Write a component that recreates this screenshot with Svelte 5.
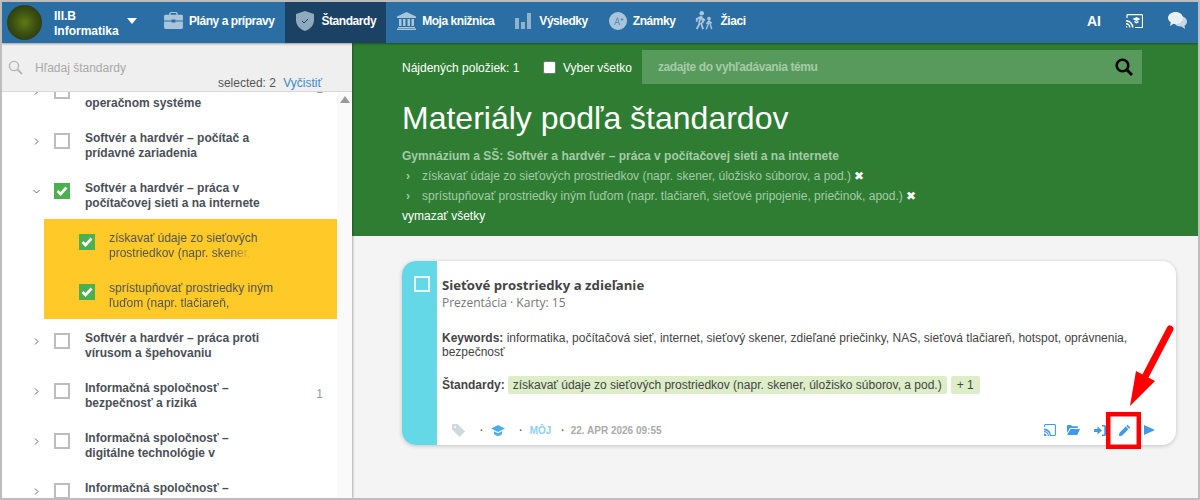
<script>
  const menu = [
    { id: "plans", label: "Plány a prípravy" },
    { id: "standards", label: "Štandardy", active: true },
    { id: "library", label: "Moja knižnica" },
    { id: "results", label: "Výsledky" },
    { id: "grades", label: "Známky" },
    { id: "pupils", label: "Žiaci" }
  ];

  const rows = [
    { lines: ["", "operačnom systéme"], count: "1", first: true },
    { lines: ["Softvér a hardvér – počítač a", "prídavné zariadenia"] },
    {
      lines: ["Softvér a hardvér – práca v", "počítačovej sieti a na internete"],
      open: true,
      checked: true,
      kids: [
        ["získavať údaje zo sieťových", "prostriedkov (napr. skener,"],
        ["sprístupňovať prostriedky iným", "ľuďom (napr. tlačiareň,"]
      ]
    },
    { lines: ["Softvér a hardvér – práca proti", "vírusom a špehovaniu"] },
    { lines: ["Informačná spoločnosť –", "bezpečnosť a riziká"], count: "1" },
    { lines: ["Informačná spoločnosť –", "digitálne technológie v"] },
    { lines: ["Informačná spoločnosť –", "autorské práva"] }
  ];
</script>

<div class="frame">
  <nav class="nav">
    <div class="klass">
      <span class="avatar"></span>
      <span class="klass-name">III.B<br />Informatika</span>
      <span class="caret"></span>
    </div>
    {#each menu as item}
      <a class="nav-item {item.id}" class:active={item.active} href="#{item.id}">
        {#if item.id === "plans"}
          <svg width="19" height="17" viewBox="0 0 20 18"><path fill="#a9c5dc" d="M7 1h6v2h1.500V1.500L13.500 0h-7L5.500 1.500V3H7zM1.500 3h17A1.500 1.500 0 0 1 20 4.500V9H12V8H8v1H0V4.500A1.500 1.500 0 0 1 1.500 3zM0 10h8v1h4v-1h8v6.500a1.500 1.500 0 0 1-1.500 1.500h-17A1.500 1.500 0 0 1 0 16.500z"/></svg>
        {:else if item.id === "standards"}
          <svg width="18" height="20" viewBox="0 0 18 20"><path fill="#8fa9bd" d="M9 0l9 3v6c0 5-3.600 9-9 11C3.600 18 0 14 0 9V3z"/><path fill="none" stroke="#1b4264" stroke-width="1" d="M6 10l2 2 4-4"/></svg>
        {:else if item.id === "library"}
          <svg width="19" height="18" viewBox="0 0 19 18"><path fill="#a9c5dc" d="M9.500 0L19 4.500V6H0V4.500zM2 7h2.500v7H2zM6 7h2.500v7H6zM10.500 7H13v7h-2.500zM14.500 7H17v7h-2.500zM1 15h17v1H1zM0 16.500h19V18H0z"/></svg>
        {:else if item.id === "results"}
          <svg width="16" height="16" viewBox="0 0 16 16"><path fill="#8fb2cf" d="M0 5h4v11H0zM6 9h4v7H6zM12 0h4v16h-4z"/></svg>
        {:else if item.id === "grades"}
          <svg width="18" height="18" viewBox="0 0 18 18"><circle cx="9" cy="9" r="9" fill="#a9c5dc"/><path fill="none" stroke="#5d8fb8" stroke-width="1" d="M5.500 13L8.500 5.500 10.500 13M6.500 10.500h3.500M11.500 7.500h3M13 6v3"/></svg>
        {:else}
          <svg width="20" height="21" viewBox="0 0 22 21"><g fill="none" stroke="#a9c5dc" stroke-width="2"><path d="M8 6L5.500 13M8 6l2 6-2 2 2 6M6.500 13L3 20M8 6L3 9v3M9 8l3 2.500"/><path stroke-width="1.500" d="M16.500 11l-1 4-2 5M16.500 11l1.500 4 1.500 5M13.500 14l3-3 3 2.500"/></g><circle cx="8.500" cy="2.500" r="2.500" fill="#a9c5dc"/><circle cx="16.500" cy="8.500" r="2" fill="#a9c5dc"/></svg>
        {/if}
        <span>{item.label}</span>
      </a>
    {/each}
    <div class="nav-right">
      <span class="ai">AI</span>
      <svg width="17" height="14" viewBox="0 0 17 14"><path fill="none" stroke="#fff" stroke-width="1.200" d="M1 4V1.500A1 1 0 0 1 2 .6h13.500a1 1 0 0 1 1 1v11a1 1 0 0 1-1 1H9"/><path fill="#fff" d="M10.500 3L14.500 5 10.500 7 6.500 5zM8.500 6.800l2 1 2-1V8.500l-2 1-2-1zM0 6a7.500 7.500 0 0 1 7.500 7.500H6A6 6 0 0 0 0 7.500zM0 9a4.500 4.500 0 0 1 4.500 4.500H3A3 3 0 0 0 0 10.500zM0 12a1.500 1.500 0 0 1 1.500 1.500H0z"/></svg>
      <svg width="19" height="17" viewBox="0 0 19 17"><path fill="#c6d8e6" d="M12 4c4 0 7 2.500 7 5.500 0 1.800-1 3.300-2.500 4.300L17 17l-3.500-2.600c-3.800.5-7.500-1.800-7.500-4.900C6 6.500 8 4 12 4z"/><path fill="#e8f0f6" d="M7.500 0C11.600 0 15 2.600 15 6s-3.400 6-7.500 6c-.7 0-1.300-.1-2-.2L2 14l.8-3.700C1.100 9.200 0 7.700 0 6c0-3.400 3.400-6 7.500-6z"/></svg>
    </div>
  </nav>

  <div class="layout">
    <aside class="side">
      <div class="side-search">
        <div class="side-query">
          <svg width="15" height="15" viewBox="0 0 15 15"><circle cx="6" cy="6" r="4.600" fill="none" stroke="#b5b5b5" stroke-width="1.400"/><path stroke="#b5b5b5" stroke-width="1.800" d="M9.500 9.500l4.500 4.500"/></svg>
          <span>Hľadaj štandardy</span>
        </div>
        <div class="selected">selected: 2 <a href="#clear">Vyčistiť</a></div>
      </div>
      <div class="side-body">
        <div class="tree">
          {#each rows as row}
            <div class="row" class:first={row.first}>
              <svg class="chev" width="7" height="7" viewBox="0 0 7 7">
                {#if row.open}
                  <path fill="none" stroke="#666" d="M.5 2l3 3 3-3"/>
                {:else}
                  <path fill="none" stroke="#666" d="M2 .5l3 3-3 3"/>
                {/if}
              </svg>
              <span class="box" class:on={row.checked}>
                {#if row.checked}
                  <svg width="12" height="10" viewBox="0 0 12 10"><path fill="none" stroke="#fff" stroke-width="2.600" d="M1.500 5l3 3 6-6.500"/></svg>
                {/if}
              </span>
              <span class="row-text">{row.lines[0]}<br />{row.lines[1]}</span>
              {#if row.count}<span class="count">{row.count}</span>{/if}
            </div>
            {#if row.kids}
              <div class="kids">
                {#each row.kids as kid}
                  <div class="kid">
                    <span class="box on">
                      <svg width="12" height="10" viewBox="0 0 12 10"><path fill="none" stroke="#fff" stroke-width="2.600" d="M1.500 5l3 3 6-6.500"/></svg>
                    </span>
                    <span class="kid-text">{kid[0]}<span class="fade">{kid[1]}</span></span>
                  </div>
                {/each}
              </div>
            {/if}
          {/each}
        </div>
        <div class="scrollbar"><span class="up"></span></div>
      </div>
    </aside>

    <main class="main">
      <section class="hero">
        <div class="tools">
          <span class="found">Nájdených položiek: 1</span>
          <label class="all"><input type="checkbox" /> Vyber všetko</label>
          <div class="search">
            <span>zadajte do vyhľadávania tému</span>
            <svg width="18" height="18" viewBox="0 0 18 18"><circle cx="7.500" cy="7.500" r="5.800" fill="none" stroke="#000" stroke-width="2.600"/><path stroke="#000" stroke-width="3" d="M11.500 11.500l5.500 5.500"/></svg>
          </div>
        </div>
        <h1>Materiály podľa štandardov</h1>
        <p class="crumb">Gymnázium a SŠ: Softvér a hardvér – práca v počítačovej sieti a na internete</p>
        <p class="pick"><i>›</i>získavať údaje zo sieťových prostriedkov (napr. skener, úložisko súborov, a pod.) <b>✖</b></p>
        <p class="pick"><i>›</i>sprístupňovať prostriedky iným ľuďom (napr. tlačiareň, sieťové pripojenie, priečinok, apod.) <b>✖</b></p>
        <a class="wipe" href="#wipe">vymazať všetky</a>
      </section>

      <section class="content">
        <article class="card">
          <div class="stripe"><span class="card-box"></span></div>
          <div class="card-body">
            <h2>Sieťové prostriedky a zdieľanie</h2>
            <div class="kind">Prezentácia · Karty: 15</div>
            <p class="keys"><strong>Keywords:</strong> informatika, počítačová sieť, internet, sieťový skener, zdieľané priečinky, NAS, sieťová tlačiareň, hotspot, oprávnenia, bezpečnosť</p>
            <div class="stds">
              <strong>Štandardy:</strong>
              <span class="tag">získavať údaje zo sieťových prostriedkov (napr. skener, úložisko súborov, a pod.)</span>
              <span class="tag more">+ 1</span>
            </div>
            <div class="foot">
              <div class="meta">
                <svg width="13" height="13" viewBox="0 0 13 13"><path fill="#cfd8df" d="M0 1a1 1 0 0 1 1-1h4.500L13 7.500 7.500 13 0 5.500zM3 2a1 1 0 1 0 0 2 1 1 0 0 0 0-2z"/></svg>
                <span class="dot first">·</span>
                <svg width="14" height="11" viewBox="0 0 14 11"><path fill="#4aaee8" d="M7 0l7 3.500L7 7 0 3.500zM3 6.300l4 2 4-2V9c-1 1.300-2.500 2-4 2S4 10.300 3 9z"/></svg>
                <span class="dot second">·</span>
                <span class="mine">MÔJ</span>
                <span class="dot third">·</span>
                <span class="date">22. APR 2026 09:55</span>
              </div>
              <div class="acts">
                <svg class="cast" width="12" height="12" viewBox="0 0 12 12"><path fill="none" stroke="#3d9be9" stroke-width="1.100" d="M.6 3V1.500a1 1 0 0 1 1-1h8.800a1 1 0 0 1 1 1v9a1 1 0 0 1-1 1H6"/><path fill="#3d9be9" d="M0 4.500A7 7 0 0 1 7 12H5.800A5.800 5.800 0 0 0 0 6.200zM0 7a5 5 0 0 1 5 5H3.800A3.800 3.800 0 0 0 0 8.200zM0 9.500A2.500 2.500 0 0 1 2.500 12H0z"/></svg>
                <svg class="folder" width="13" height="10" viewBox="0 0 13 10"><path fill="#3d9be9" d="M0 1a1 1 0 0 1 1-1h3l1 1.200h5a1 1 0 0 1 1 1V3H3L0 8zM3.500 4H13l-2.800 6H0z"/></svg>
                <svg width="12" height="11" viewBox="0 0 12 11"><path fill="#3d9be9" d="M0 4h3.500V1.500L8 5.500 3.500 9.500V7H0zM8 0h2.500A1.500 1.500 0 0 1 12 1.500v8A1.500 1.500 0 0 1 10.500 11H8V9.500h2.300V1.500H8z"/></svg>
                <svg width="12" height="12" viewBox="0 0 12 12"><path fill="#3d9be9" d="M8.500.8L11.200 3.500 10 4.700 7.300 2zM6.700 2.600L9.400 5.300 3 11.700 0 12l.3-3z"/></svg>
                <svg width="11" height="10" viewBox="0 0 11 10"><path fill="#3d9be9" d="M0 0l11 5L0 10z"/></svg>
              </div>
            </div>
          </div>
        </article>
      </section>
    </main>
  </div>

  <svg class="marker" width="80" height="130" viewBox="0 0 80 130">
    <rect x="10.200" y="89.200" width="30.600" height="32.600" fill="none" stroke="#f00" stroke-width="4.500"/>
    <path stroke="#f00" stroke-width="7" stroke-linecap="round" d="M72 4L48 50"/>
    <path fill="#f00" d="M32 81L38 46 57 56z"/>
  </svg>
</div>

<style>
  :global(body) {
    margin: 0;
    font-family: "Liberation Sans", Arial, sans-serif;
    background: #f4f4f4;
  }

  .frame {
    position: relative;
    width: 1200px;
    height: 500px;
    box-sizing: border-box;
    border: 2px solid #bdbdbd;
    overflow: hidden;
    display: flex;
    flex-direction: column;
  }

  .nav {
    flex: none;
    height: 41px;
    background: #2b6ea3;
    display: flex;
    align-items: stretch;
    box-shadow: 0 1px 2px rgba(0, 0, 0, 0.35);
    position: relative;
    z-index: 2;
  }

  .klass {
    width: 151px;
    box-sizing: border-box;
    padding-left: 5px;
    display: flex;
    align-items: center;
    color: #fff;
    font-size: 12px;
    font-weight: bold;
    line-height: 15px;
  }

  .avatar {
    width: 35px;
    height: 35px;
    border-radius: 50%;
    background: radial-gradient(circle at 50% 50%, #5c7a14 0, #3d5210 45%, #1b2a14 100%);
    margin-right: 12px;
  }

  .klass-name {
    width: 73px;
    padding-top: 2px;
  }

  .caret {
    width: 0;
    height: 0;
    border-left: 5px solid transparent;
    border-right: 5px solid transparent;
    border-top: 6px solid #fff;
    margin-bottom: 4px;
  }

  .nav-item {
    display: flex;
    align-items: center;
    gap: 6px;
    padding: 0 10px 4px 11px;
    color: #fff;
    font-size: 12px;
    font-weight: bold;
    letter-spacing: -0.45px;
    text-decoration: none;
    white-space: nowrap;
  }

  .nav-item.active {
    background: #1b4264;
  }

  .standards svg {
    margin-right: 2px;
  }

  .results svg {
    margin-right: 2px;
  }

  .pupils svg {
    margin-left: -2px;
  }

  .nav-right {
    margin-left: auto;
    display: flex;
    align-items: center;
    gap: 25px;
    padding: 0 11px 4px 0;
  }

  .ai {
    color: #fff;
    font-size: 14px;
    font-weight: bold;
  }

  .layout {
    flex: 1;
    min-height: 0;
    display: flex;
  }

  .side {
    width: 350px;
    flex: none;
    display: flex;
    flex-direction: column;
    background: #fff;
    box-shadow: 1px 0 2px rgba(0, 0, 0, 0.3);
    position: relative;
    z-index: 1;
  }

  .side-search {
    height: 49px;
    box-sizing: border-box;
    background: #efefef;
    border-bottom: 1px solid #d8d8d8;
    padding: 17px 30px 0 6px;
    font-size: 12px;
  }

  .side-query {
    display: flex;
    align-items: center;
    gap: 12px;
    color: #a9a9a9;
  }

  .selected {
    text-align: right;
    color: #555;
    margin-top: 1px;
  }

  .selected a {
    margin-left: 4px;
    color: #3c8ac7;
    text-decoration: none;
  }

  .side-body {
    flex: 1;
    min-height: 0;
    display: flex;
    overflow: hidden;
  }

  .tree {
    width: 335px;
    flex: none;
    margin-top: -23px;
  }

  .scrollbar {
    flex: 1;
    background: #fafafa;
    display: flex;
    justify-content: center;
    padding-top: 4px;
  }

  .up {
    width: 0;
    height: 0;
    border-left: 5px solid transparent;
    border-right: 5px solid transparent;
    border-bottom: 7px solid #999;
  }

  .row {
    height: 50px;
    display: flex;
    align-items: center;
    position: relative;
    padding-left: 31px;
    box-sizing: border-box;
  }

  .chev {
    flex: none;
    margin: 0 14px 6px 0;
  }

  .box {
    flex: none;
    box-sizing: border-box;
    width: 16px;
    height: 16px;
    border: 2px solid #bdbdbd;
    display: flex;
    align-items: center;
    justify-content: center;
    background: #fff;
    margin-bottom: 6px;
  }

  .box.on {
    border: 0;
    background: #4caf50;
  }

  .kid .box {
    margin-bottom: 4px;
  }

  .row-text {
    margin: 4px 0 0 15px;
    font-size: 12px;
    font-weight: bold;
    line-height: 15px;
    color: #4a4f57;
    white-space: nowrap;
  }

  .count {
    position: absolute;
    right: 14px;
    top: 18px;
    font-size: 12px;
    color: #999;
  }

  .first .count {
    top: 13px;
  }

  .kids {
    margin-left: 42px;
    background: #ffca28;
  }

  .kid {
    height: 50px;
    box-sizing: border-box;
    padding-left: 35px;
    display: flex;
    align-items: center;
  }

  .kid-text {
    margin-left: 14px;
    font-size: 12px;
    line-height: 15px;
    color: #555;
    white-space: nowrap;
    padding-top: 3px;
  }

  .fade {
    display: block;
    width: 142px;
    overflow: hidden;
    -webkit-mask-image: linear-gradient(90deg, #000 86%, transparent 100%);
    mask-image: linear-gradient(90deg, #000 86%, transparent 100%);
  }

  .main {
    flex: 1;
    min-width: 0;
    display: flex;
    flex-direction: column;
  }

  .hero {
    height: 193px;
    box-sizing: border-box;
    background: #2e7d32;
    padding: 7px 0 0 50px;
    color: #fff;
    flex: none;
  }

  .tools {
    display: flex;
    align-items: center;
    font-size: 12px;
    height: 34px;
  }

  .found {
    width: 141px;
    padding-top: 1px;
  }

  .all {
    display: flex;
    align-items: center;
    gap: 7px;
    width: 99px;
    white-space: nowrap;
    padding-top: 1px;
  }

  .all input {
    margin: 0;
    width: 13px;
    height: 13px;
    appearance: none;
    background: #fff;
    border: 1px solid #767676;
    border-radius: 2px;
  }

  .search {
    width: 500px;
    height: 34px;
    box-sizing: border-box;
    background: #589a5c;
    display: flex;
    align-items: center;
    justify-content: space-between;
    padding: 0 9px 0 16px;
    color: #a5cba7;
    font-weight: bold;
    letter-spacing: -0.4px;
  }

  h1 {
    margin: 16px 0 0;
    font-size: 32px;
    font-weight: normal;
    line-height: 36px;
  }

  .crumb {
    margin: 12px 0 0;
    font-size: 12px;
    font-weight: bold;
    line-height: 16px;
    color: #a5cba7;
  }

  .pick {
    margin: 4px 0 0;
    font-size: 12px;
    line-height: 16px;
    color: #a5cba7;
  }

  .pick i {
    display: inline-block;
    width: 20px;
    padding-left: 4px;
    box-sizing: border-box;
    font-style: normal;
    font-weight: bold;
  }

  .pick b {
    color: #fff;
    font-weight: normal;
    font-size: 12px;
  }

  .wipe {
    display: block;
    margin-top: 4px;
    font-size: 12px;
    line-height: 16px;
    color: #fff;
    text-decoration: none;
  }

  .content {
    flex: 1;
    background: #f4f4f4;
    padding: 25px 22px 0 50px;
  }

  .card {
    height: 184px;
    display: flex;
    background: #fff;
    border-radius: 14px;
    overflow: hidden;
    box-shadow: 0 1px 4px rgba(0, 0, 0, 0.2);
  }

  .stripe {
    width: 35px;
    flex: none;
    background: #64d8e6;
    padding: 15px 0 0 12px;
    box-sizing: border-box;
  }

  .card-box {
    display: block;
    width: 16px;
    height: 16px;
    box-sizing: border-box;
    border: 2px solid #e8f9fb;
  }

  .card-body {
    flex: 1;
    min-width: 0;
    padding: 16px 14px 0 5px;
    display: flex;
    flex-direction: column;
  }

  h2 {
    margin: 0;
    font-family: "Open Sans", sans-serif;
    font-size: 13.200px;
    font-weight: bold;
    line-height: 17px;
    color: #444;
  }

  .kind {
    font-family: "Open Sans", sans-serif;
    font-size: 12px;
    line-height: 17px;
    color: #777;
  }

  .keys {
    margin: 20px 0 0;
    font-size: 12px;
    line-height: 14px;
    color: #444;
  }

  .stds {
    margin-top: 17px;
    display: flex;
    align-items: center;
    gap: 4px;
    font-size: 12px;
    color: #444;
  }

  .stds strong {
    margin-right: -1px;
  }

  .tag {
    background: #dcedc8;
    border-radius: 2px;
    padding: 0 5px;
    line-height: 18px;
  }

  .more {
    padding: 0 6px;
  }

  .foot {
    margin-top: auto;
    height: 23px;
    display: flex;
    align-items: flex-start;
    justify-content: space-between;
    padding-right: 7px;
  }

  .meta {
    display: flex;
    align-items: center;
    padding-left: 10px;
    font-size: 10px;
    font-weight: bold;
    color: #aaa;
    height: 16px;
  }

  .dot {
    margin: 0 8px 0 10px;
    color: #666;
  }

  .dot.first {
    margin: 0 8px 0 15px;
  }

  .dot.second {
    margin: 0 7px 0 14px;
  }

  .dot.third {
    margin: 0 6px 0 10px;
  }

  .mine {
    color: #90d0f5;
  }

  .acts {
    display: flex;
    align-items: center;
    gap: 13px;
    height: 16px;
  }

  .cast {
    margin-right: -2px;
  }

  .folder {
    margin-right: 1px;
  }

  .marker {
    position: absolute;
    left: 1096px;
    top: 323px;
  }
</style>
